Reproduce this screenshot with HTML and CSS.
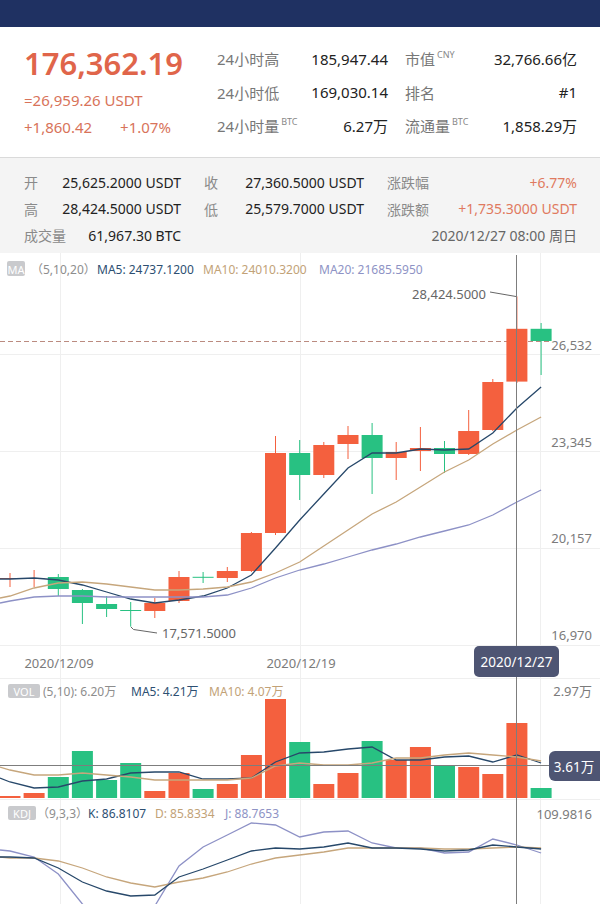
FILE: index.html
```html
<!DOCTYPE html>
<html lang="zh-CN">
<head>
    <meta charset="UTF-8">
    <meta name="viewport" content="width=device-width, initial-scale=1.0">
    <title>BTC/USDT 行情</title>
    <link rel="stylesheet" href="styles.css">
</head>
<body>
    <div class="topbar"></div>

    <div class="summary">
        <div class="price-box">
            <div class="last">176,362.19</div>
            <div class="usdt">=26,959.26 USDT</div>
            <div class="change"><span>+1,860.42</span><span>+1.07%</span></div>
        </div>
        <div class="stats">
            <div class="stat"><span class="k">24小时高</span><span class="v">185,947.44</span></div>
            <div class="stat"><span class="k">市值<sup>CNY</sup></span><span class="v">32,766.66亿</span></div>
            <div class="stat"><span class="k">24小时低</span><span class="v">169,030.14</span></div>
            <div class="stat"><span class="k">排名</span><span class="v">#1</span></div>
            <div class="stat"><span class="k">24小时量<sup>BTC</sup></span><span class="v">6.27万</span></div>
            <div class="stat"><span class="k">流通量<sup>BTC</sup></span><span class="v">1,858.29万</span></div>
        </div>
    </div>

    <div class="ohlc">
        <div class="cell"><span class="k">开</span><span>25,625.2000 USDT</span></div>
        <div class="cell"><span class="k">收</span><span>27,360.5000 USDT</span></div>
        <div class="cell"><span class="k">涨跌幅</span><span class="up">+6.77%</span></div>
        <div class="cell"><span class="k">高</span><span>28,424.5000 USDT</span></div>
        <div class="cell"><span class="k">低</span><span>25,579.7000 USDT</span></div>
        <div class="cell"><span class="k">涨跌额</span><span class="up">+1,735.3000 USDT</span></div>
        <div class="cell"><span class="k">成交量</span><span>61,967.30 BTC</span></div>
        <div class="cell date">2020/12/27 08:00 周日</div>
    </div>

    <svg id="chart" class="chart" width="600" height="651" viewBox="0 253 600 651">
        <g class="grid">
            <line x1="60.5" y1="253" x2="60.5" y2="904"/>
            <line x1="300.5" y1="253" x2="300.5" y2="904"/>
            <line x1="540.5" y1="253" x2="540.5" y2="904"/>
            <line x1="0" y1="354.5" x2="600" y2="354.5"/>
            <line x1="0" y1="451.5" x2="600" y2="451.5"/>
            <line x1="0" y1="548.5" x2="600" y2="548.5"/>
            <line x1="0" y1="645.5" x2="600" y2="645.5"/>
            <line x1="0" y1="678.5" x2="600" y2="678.5"/>
            <line x1="0" y1="799.5" x2="600" y2="799.5"/>
        </g>

        <line class="last-line" x1="0" y1="341.5" x2="551" y2="341.5"/>

        <g id="plot"></g>

        <!-- legends -->
        <rect class="badge" x="7" y="261" width="18" height="15" rx="2"/>
        <text class="badge-text" x="16" y="269">MA</text>
        <text class="legend" x="31" y="269"><tspan class="muted">（5,10,20）</tspan><tspan class="c1" x="97">MA5: 24737.1200</tspan><tspan class="c2" x="203">MA10: 24010.3200</tspan><tspan class="c3" x="319">MA20: 21685.5950</tspan></text>

        <rect class="badge" x="8" y="684" width="32" height="14" rx="2"/>
        <text class="badge-text" x="24" y="691">VOL</text>
        <text class="legend" x="43" y="691"><tspan class="muted">(5,10): 6.20万</tspan><tspan class="c1" x="131">MA5: 4.21万</tspan><tspan class="c2" x="209">MA10: 4.07万</tspan></text>

        <rect class="badge" x="8" y="806" width="28" height="14" rx="2"/>
        <text class="badge-text" x="22" y="813">KDJ</text>
        <text class="legend" x="37" y="813"><tspan class="muted">（9,3,3）</tspan><tspan class="c1" x="88">K: 86.8107</tspan><tspan class="c2" x="155">D: 85.8334</tspan><tspan class="c3" x="225">J: 88.7653</tspan></text>

        <!-- axis -->
        <text class="axis" x="592" y="345">26,532</text>
        <text class="axis" x="592" y="442">23,345</text>
        <text class="axis" x="592" y="538">20,157</text>
        <text class="axis" x="592" y="635">16,970</text>
        <text class="axis" x="592" y="691">2.97万</text>
        <text class="axis" x="592" y="814">109.9816</text>
        <text class="date-label" x="59" y="663">2020/12/09</text>
        <text class="date-label" x="301" y="663">2020/12/19</text>

        <!-- high / low marks -->
        <polyline class="mark" points="490,292 516,296.5"/>
        <text class="mark-text" x="486" y="294">28,424.5000</text>
        <polyline class="mark" points="131,627 133.5,629.5 157,633"/>
        <text class="mark-text start" x="162" y="633">17,571.5000</text>

        <!-- crosshair -->
        <line class="cross" x1="516.5" y1="255" x2="516.5" y2="904"/>
        <line class="cross" x1="0" y1="765.5" x2="549" y2="765.5"/>
        <rect class="tip" x="474" y="646" width="85" height="31" rx="5"/>
        <text class="tip-text" x="516.5" y="662">2020/12/27</text>
        <rect class="tip" x="549" y="751" width="60" height="30" rx="6"/>
        <text class="tip-text" x="574" y="766.5">3.61万</text>
    </svg>

    <script>
        (function () {
            const plot = document.getElementById("plot");
            const step = 24.14,
                  first = 10,
                  bodyW = 21,
                  volBase = 798;
            const up = "#f4603e",
                  down = "#28c182";

            // 16,970 sits on y=645, 26,532 on y=354
            function y(p) {
                return 645 - (p - 16970) * 291 / 9562;
            }
            function x(i) {
                return first + step * i;
            }

            // open, high, low, close
            const candles = [
                [19139, 19336, 18876, 19172],
                [19160, 19435, 18876, 19172],
                [19204, 19303, 18580, 18810],
                [18777, 18810, 17660, 18350],
                [18317, 18580, 17890, 18153],
                [18120, 18383, 17571.5, 18110],
                [18087, 18514, 17857, 18350],
                [18416, 19402, 18350, 19204],
                [19210, 19369, 19007, 19200],
                [19172, 19533, 19040, 19402],
                [19402, 20683, 19369, 20650],
                [20650, 23838, 20585, 23279],
                [23279, 23706, 21735, 22556],
                [22556, 23641, 22458, 23542],
                [23575, 24166, 23082, 23871],
                [23871, 24265, 21932, 23115],
                [23115, 23641, 22392, 23312],
                [23345, 24133, 22688, 23443],
                [23443, 23673, 22622, 23246],
                [23246, 24692, 23213, 24002],
                [24035, 25711, 24002, 25612],
                [25625.2, 28424.5, 25579.7, 27360.5],
                [27360.5, 27551, 25842, 26959.26]
            ];

            // plotted y of each series, px
            const volTop = [796, 793, 777, 751, 780, 763, 791, 773, 789, 784, 755, 699, 742, 784, 773, 741, 760, 747, 765, 767, 774, 723, 788];
            const ma = [
                [579, "#27486a", [579, 578, 580, 585, 592, 599, 603, 600, 596, 588, 575, 548, 520, 494, 468, 453, 453, 449, 450, 449, 433, 408, 387]],
                [598, "#c6a67c", [596, 588, 583, 582, 584, 587, 590, 590, 589, 587, 582, 573, 562, 546, 530, 514, 502, 487, 472, 460, 444, 430, 417]],
                [603, "#8d91c6", [601, 597, 596, 596, 597, 597, 597, 597, 597, 595, 588, 578, 570, 564, 557, 550, 544, 537, 531, 525, 515, 502, 490]]
            ];
            const volMa = [
                [778, "#27486a", [782, 788, 787, 781, 779, 773, 772, 772, 779, 779, 778, 762, 753, 752, 749, 747, 760, 760, 757, 756, 762, 755, 763]],
                [767, "#c6a67c", [770, 775, 775, 773, 775, 777, 780, 780, 780, 780, 778, 766, 763, 765, 765, 763, 758, 758, 755, 753, 755, 757, 761]]
            ];
            const kdj = [
                [850, "#8d91c6", [851, 857, 874, 904, 925, 925, 906, 866, 847, 835, 823, 825, 837, 832, 831, 843, 848, 848, 853, 852, 839, 845, 853]],
                [857, "#c6a67c", [858, 858, 861, 868, 877, 883, 887, 882, 878, 872, 864, 858, 855, 852, 848, 848, 848, 848, 849, 849, 848, 847, 848]],
                [857, "#27486a", [857, 858, 868, 882, 891, 896, 895, 877, 869, 860, 851, 848, 849, 847, 843, 848, 848, 849, 851, 850, 845, 847, 849]]
            ];

            function path(series) {
                let d = "M0," + series[0];
                series[2].forEach(function (v, i) {
                    d += " L" + x(i).toFixed(1) + "," + v;
                });
                return '<path d="' + d + '" fill="none" stroke="' + series[1] + '" stroke-width="1.3"/>';
            }

            let out = "";
            candles.forEach(function (c, i) {
                const color = c[3] >= c[0] ? up : down,
                      cx = x(i).toFixed(1),
                      top = y(Math.max(c[0], c[3])),
                      bottom = y(Math.min(c[0], c[3]));
                out += '<line x1="' + cx + '" x2="' + cx + '" y1="' + y(c[1]).toFixed(1) + '" y2="' + y(c[2]).toFixed(1) + '" stroke="' + color + '"/>';
                out += '<rect x="' + (x(i) - bodyW / 2).toFixed(1) + '" y="' + top.toFixed(1) + '" width="' + bodyW + '" height="' + Math.max(bottom - top, 1).toFixed(1) + '" fill="' + color + '"/>';
                out += '<rect x="' + (x(i) - bodyW / 2).toFixed(1) + '" y="' + volTop[i] + '" width="' + bodyW + '" height="' + (volBase - volTop[i]) + '" fill="' + color + '"/>';
            });
            ma.concat(volMa, kdj).forEach(function (s) {
                out += path(s);
            });
            plot.innerHTML = out;
        }());
    </script>
</body>
</html>
```

FILE: styles.css
```css
* {
    box-sizing: border-box;
    margin: 0;
    padding: 0;
}
body {
    width: 600px;
    background: #fff;
    color: #222;
    font-family: "Noto Sans", "Noto Sans CJK SC", sans-serif;
}
.topbar {
    height: 27px;
    background: #1f3162;
}
.summary {
    display: flex;
    height: 130px;
    padding: 0 23px 0 24px;
}
.price-box {
    width: 193px;
}
.last {
    margin-top: 17px;
    color: #e0654a;
    font-size: 31px;
    font-weight: 600;
    line-height: 38px;
}
.usdt,
.change {
    color: #d8735a;
    font-size: 15px;
    line-height: 20px;
}
.usdt {
    margin-top: 8px;
}
.change {
    display: flex;
    gap: 28px;
    margin-top: 7px;
}
.stats {
    display: grid;
    flex: 1;
    grid-template-columns: 171px 172px;
    grid-auto-rows: 33.5px;
    column-gap: 17px;
    padding-top: 15px;
}
.stat {
    align-items: center;
    display: flex;
    font-size: 15px;
    justify-content: space-between;
}
.stat .k {
    color: #777;
}
.stat sup {
    color: #888;
    font-size: 9px;
    line-height: 1;
    margin-left: 2px;
    vertical-align: 7px;
}
.ohlc {
    background: #f4f4f4;
    border-top: 1px solid #dadada;
    column-gap: 23px;
    display: grid;
    font-size: 14px;
    grid-auto-rows: 26.5px;
    grid-template-columns: 157px 160px 1fr;
    height: 96px;
    padding: 11px 23px 0 24px;
}
.ohlc .cell {
    align-items: center;
    display: flex;
    justify-content: space-between;
}
.ohlc .k {
    color: #8a8a8a;
}
.ohlc .up {
    color: #e07a5f;
}
.ohlc .date {
    color: #666;
    grid-column: 2 / 4;
    justify-content: flex-end;
}

/* chart */
.chart {
    display: block;
}
.chart text {
    dominant-baseline: central;
    font-family: "Noto Sans", "Noto Sans CJK SC", sans-serif;
}
.grid line {
    stroke: #efefef;
    stroke-width: 1;
}
.last-line {
    stroke: #bb8b80;
    stroke-dasharray: 5 3;
    stroke-width: 1;
}
.badge {
    fill: #c9cacd;
}
.badge-text {
    fill: #fff;
    font-size: 11px;
    text-anchor: middle;
}
.legend {
    font-size: 12px;
}
.legend .muted {
    fill: #8d8d8d;
}
.legend .c1 {
    fill: #2d4f72;
}
.legend .c2 {
    fill: #c2a277;
}
.legend .c3 {
    fill: #8e93c5;
}
.axis {
    fill: #7b7b7b;
    font-size: 13px;
    text-anchor: end;
}
.date-label {
    fill: #7b7b7b;
    font-size: 13px;
    text-anchor: middle;
}
.mark {
    fill: none;
    stroke: #666;
    stroke-width: 1;
}
.mark-text {
    fill: #666;
    font-size: 13px;
    text-anchor: end;
}
.mark-text.start {
    text-anchor: start;
}
.cross {
    stroke: #7d7d7d;
    stroke-width: 1;
}
.tip {
    fill: #4e5573;
}
.tip-text {
    fill: #fff;
    font-size: 13.5px;
    text-anchor: middle;
}
```
